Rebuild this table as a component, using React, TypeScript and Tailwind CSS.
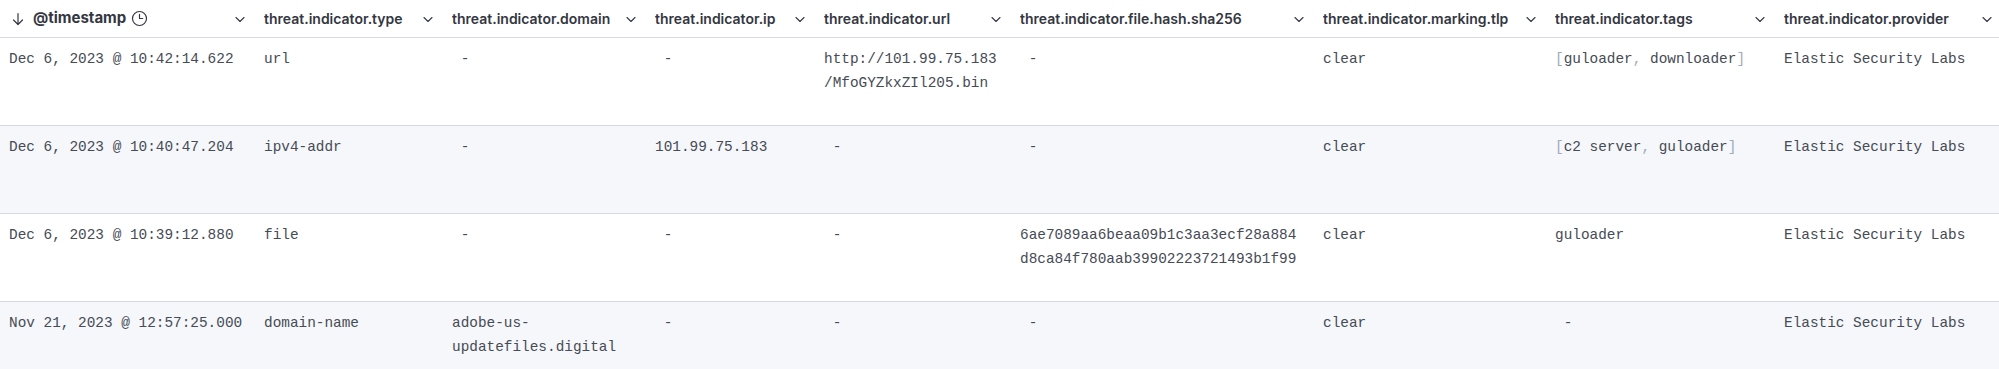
import React from "react";

const Chevron = () => (
  <svg width="12" height="12" viewBox="0 0 12 12" className="shrink-0" fill="none">
    <path d="M2 4.5 L6 8.5 L10 4.5" stroke="#343741" strokeWidth="1.1" strokeLinecap="round" strokeLinejoin="round" />
  </svg>
);

const SortDown = () => (
  <svg width="14" height="14" viewBox="0 0 14 14" fill="none" className="shrink-0">
    <path d="M7 1.5 V12.5 M2.5 8 L7 12.5 L11.5 8" stroke="#343741" strokeWidth="1.2" strokeLinecap="round" strokeLinejoin="round" />
  </svg>
);

const Clock = () => (
  <svg width="17" height="17" viewBox="0 0 16 16" fill="none" className="shrink-0">
    <circle cx="8" cy="8" r="6.6" stroke="#343741" strokeWidth="1.1" />
    <path d="M8 4 V8 H11" stroke="#343741" strokeWidth="1.1" strokeLinecap="round" strokeLinejoin="round" />
  </svg>
);

const headers = [
  "@timestamp",
  "threat.indicator.type",
  "threat.indicator.domain",
  "threat.indicator.ip",
  "threat.indicator.url",
  "threat.indicator.file.hash.sha256",
  "threat.indicator.marking.tlp",
  "threat.indicator.tags",
  "threat.indicator.provider",
];

const D = () => <span>{"\u00a0-"}</span>;

const Tags = ({ items }: { items: string[] }) => (
  <span>
    <span className="text-[#a2abba]">[</span>
    {items.map((t, i) => (
      <React.Fragment key={t}>
        {i > 0 && <span className="text-[#a2abba]">, </span>}
        <span>{t}</span>
      </React.Fragment>
    ))}
    <span className="text-[#a2abba]">]</span>
  </span>
);

type Row = React.ReactNode[];

const rows: Row[] = [
  [
    "Dec 6, 2023 @ 10:42:14.622",
    "url",
    <D />,
    <D />,
    <>
      http://101.99.75.183
      <br />
      /MfoGYZkxZIl205.bin
    </>,
    <D />,
    "clear",
    <Tags items={["guloader", "downloader"]} />,
    "Elastic Security Labs",
  ],
  [
    "Dec 6, 2023 @ 10:40:47.204",
    "ipv4-addr",
    <D />,
    "101.99.75.183",
    <D />,
    <D />,
    "clear",
    <Tags items={["c2 server", "guloader"]} />,
    "Elastic Security Labs",
  ],
  [
    "Dec 6, 2023 @ 10:39:12.880",
    "file",
    <D />,
    <D />,
    <D />,
    <>
      6ae7089aa6beaa09b1c3aa3ecf28a884
      <br />
      d8ca84f780aab39902223721493b1f99
    </>,
    "clear",
    "guloader",
    "Elastic Security Labs",
  ],
  [
    "Nov 21, 2023 @ 12:57:25.000",
    "domain-name",
    <>
      adobe-us-
      <br />
      updatefiles.digital
    </>,
    <D />,
    <D />,
    <D />,
    "clear",
    <D />,
    "Elastic Security Labs",
  ],
];

export default function App() {
  return (
    <div className="w-[1999px] h-[369px] overflow-hidden bg-white">
      <div className="grid grid-cols-[252px_188px_203px_169px_196px_303px_232px_229px_227px] h-[38px] border-b border-[#d3dae6] font-['Inter',sans-serif] text-[14px] font-semibold text-[#343741]">
        {headers.map((h, i) => (
          <div key={h} className={`flex items-center justify-between pr-[6px] ${i === 0 ? "pl-[11px]" : "pl-[12px]"}`}>
            {i === 0 ? (
              <div className="flex items-center">
                <SortDown />
                <span className="ml-[8px] text-[15px] font-bold">{h}</span>
                <span className="ml-[5px]"><Clock /></span>
              </div>
            ) : (
              <span className="whitespace-nowrap overflow-hidden">{h}</span>
            )}
            <Chevron />
          </div>
        ))}
      </div>
      {rows.map((r, ri) => (
        <div
          key={ri}
          className={`grid grid-cols-[252px_188px_203px_169px_196px_303px_232px_229px_227px] h-[88px] border-b border-[#d3dae6] font-['Liberation_Mono',monospace] text-[14.4px] leading-[24px] text-[#464b55] ${ri % 2 === 1 ? "bg-[#f5f7fa]" : "bg-white"}`}
        >
          {r.map((c, ci) => (
            <div key={ci} className={`pt-[9px] whitespace-nowrap ${ci === 0 ? "pl-[9px]" : "pl-[12px]"}`}>
              {c}
            </div>
          ))}
        </div>
      ))}
    </div>
  );
}
